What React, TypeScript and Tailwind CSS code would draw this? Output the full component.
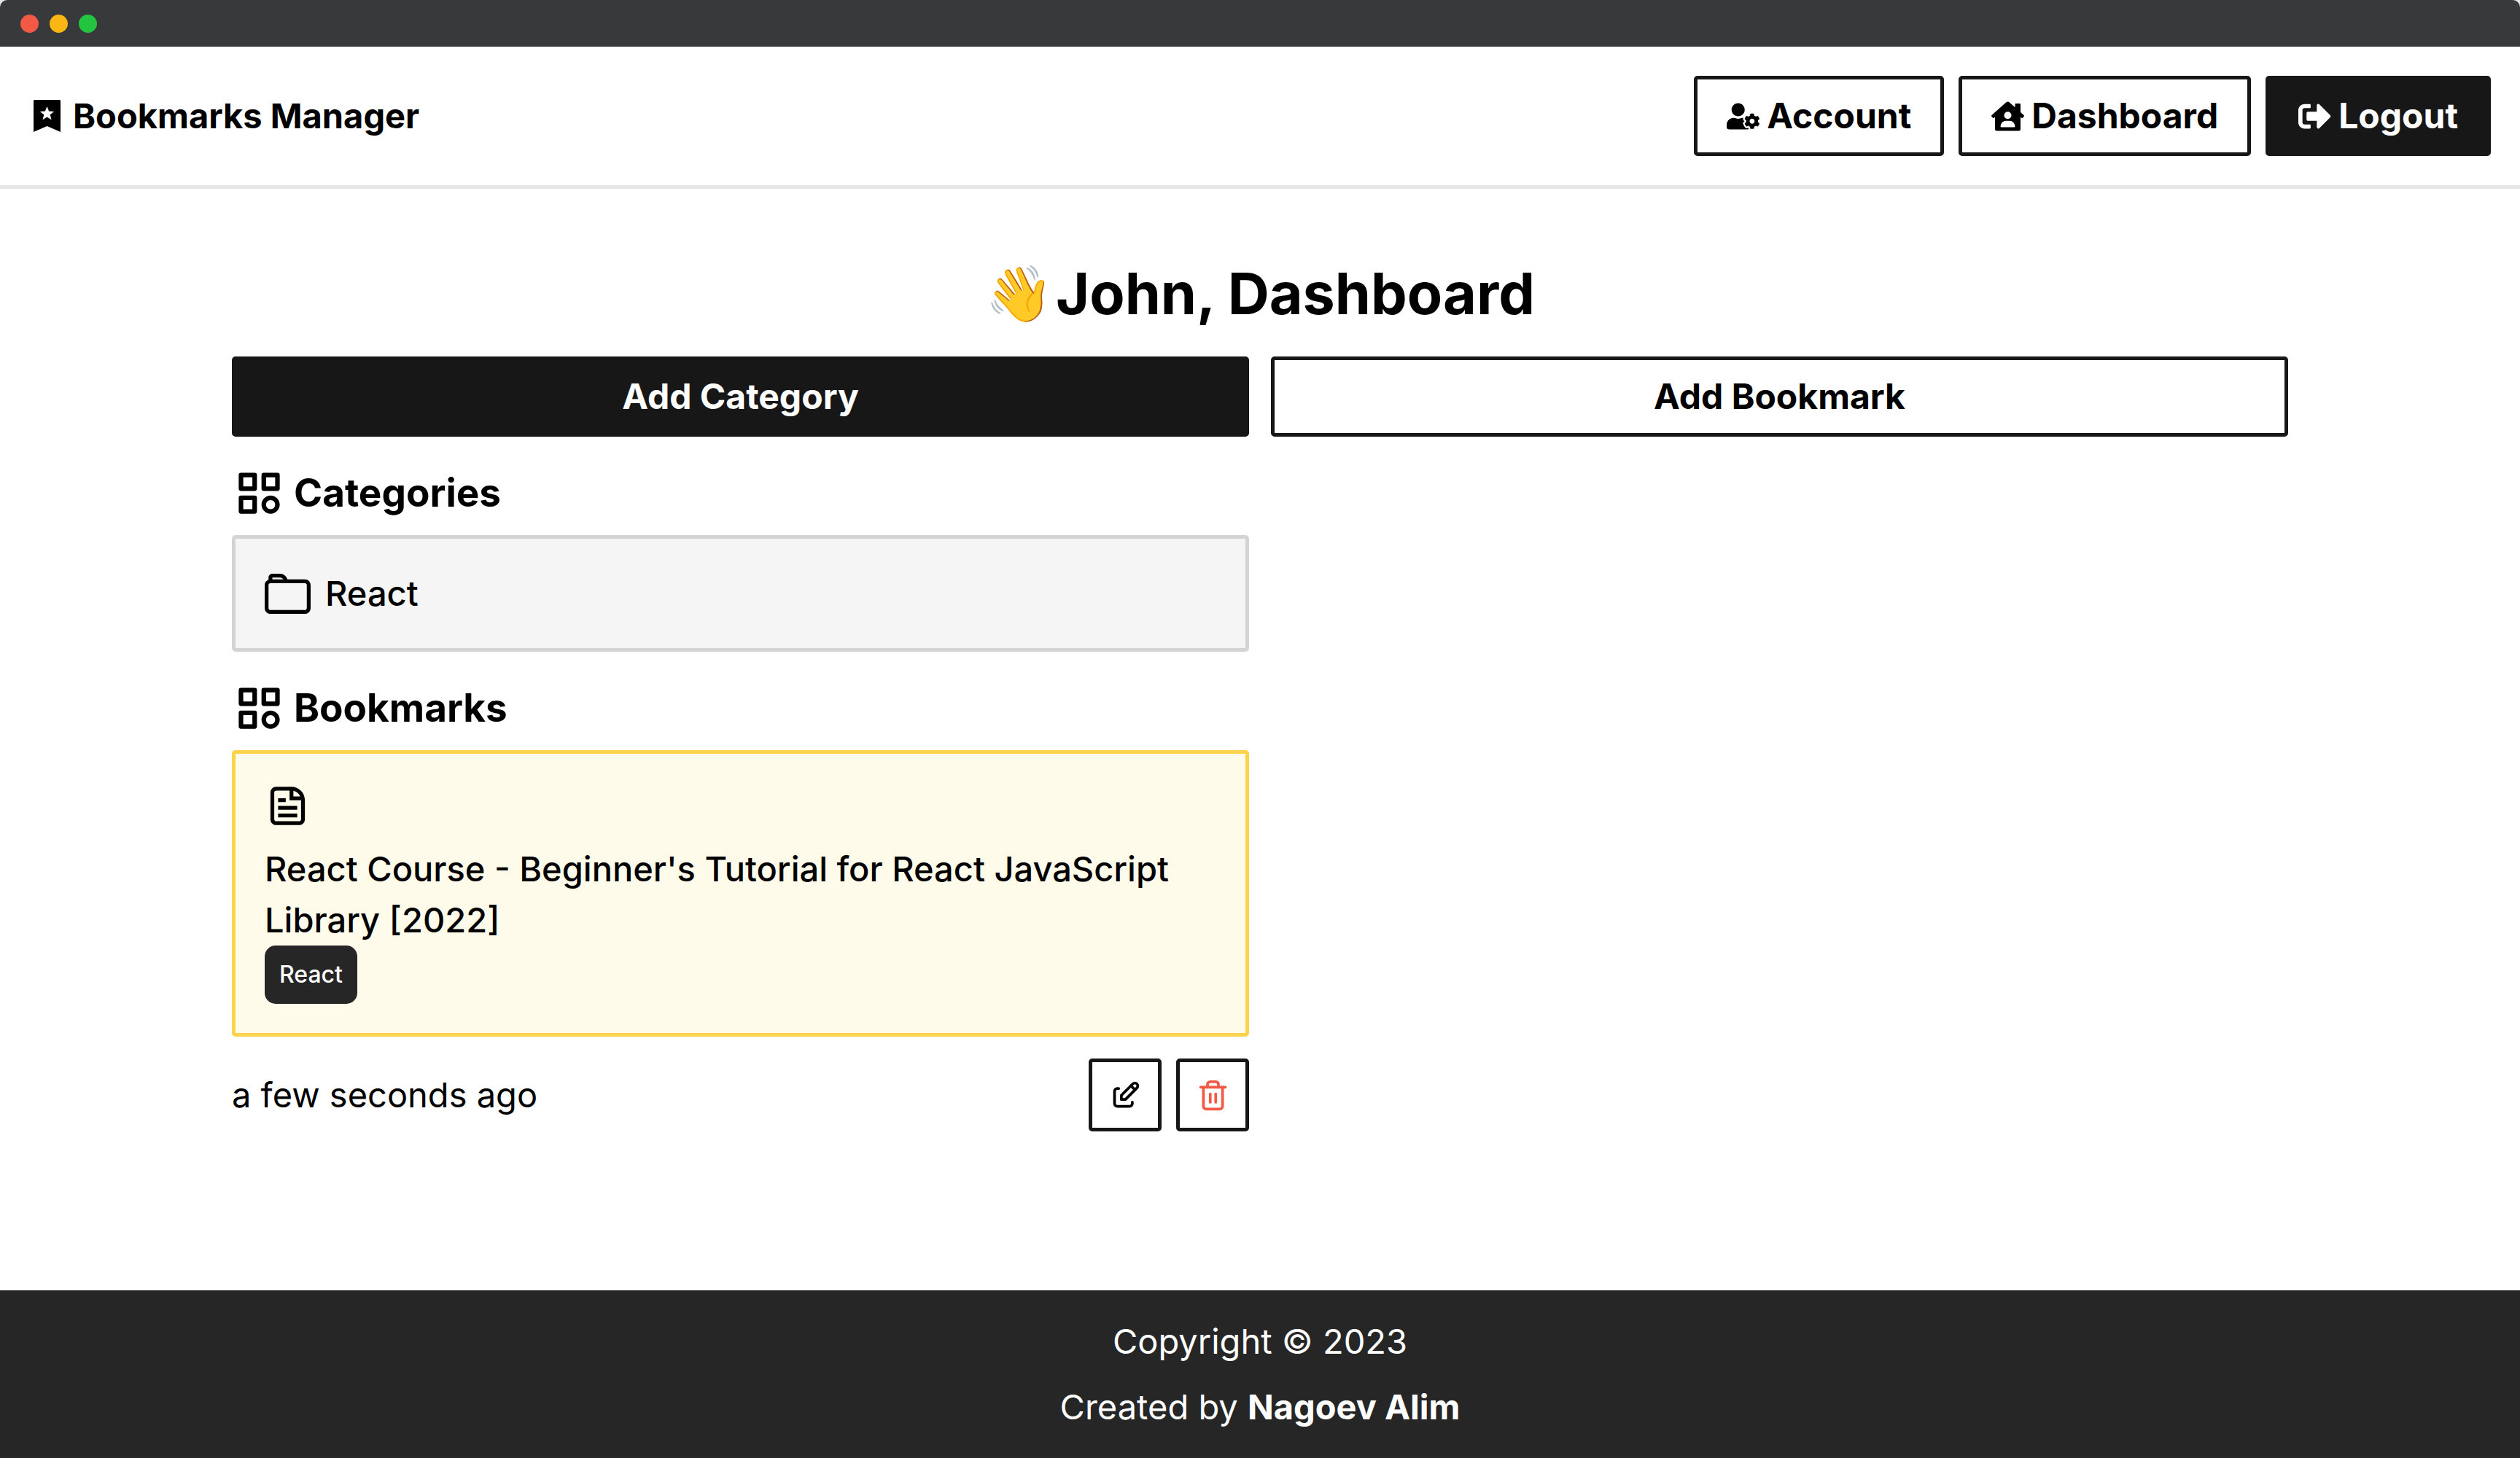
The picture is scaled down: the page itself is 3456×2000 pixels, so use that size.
import type { ReactNode } from "react";
import { BiCategory } from "react-icons/bi";
import { CgFileDocument, CgFolder } from "react-icons/cg";
import { FaHouseUser, FaSignOutAlt, FaUserCog } from "react-icons/fa";
import { FiTrash2 } from "react-icons/fi";
import { TbEdit } from "react-icons/tb";

function LogoMark() {
  return (
    <svg viewBox="0 0 50 50" className="size-[50px]" aria-hidden="true">
      <path
        fillRule="evenodd"
        fill="currentColor"
        d="M7.500 3h34A1.500 1.500 0 0 1 43 4.500V47L24.500 39L6 47V4.500A1.500 1.500 0 0 1 7.500 3ZM24.500 12L27.100 18.400L34.200 18.900L28.700 23.300L30.500 30.200L24.500 26.500L18.500 30.200L20.300 23.300L14.800 18.900L21.900 18.400Z"
      />
    </svg>
  );
}

function WindowBar() {
  return (
    <div className="flex h-16 items-center gap-[15px] rounded-t-[10px] bg-[#38393b] px-7">
      <span className="size-[25px] rounded-full bg-[#f25a46]" />
      <span className="size-[25px] rounded-full bg-[#fcb614]" />
      <span className="size-[25px] rounded-full bg-[#25c440]" />
    </div>
  );
}

function NavLink({ icon, label }: { icon: ReactNode; label: string }) {
  return (
    <a
      href="#"
      className="flex h-[110px] items-center gap-[10px] rounded-[5px] border-[5px] border-neutral-900 px-10 text-[48px] font-bold"
    >
      {icon}
      {label}
    </a>
  );
}

function SectionTitle({ children }: { children: ReactNode }) {
  return (
    <h2 className="mt-10 mb-5 flex items-center gap-[10px] text-[53px] leading-[75px] font-bold">
      <BiCategory className="size-[75px]" />
      {children}
    </h2>
  );
}

function IconButton({ label, children }: { label: string; children: ReactNode }) {
  return (
    <button
      type="button"
      aria-label={label}
      className="flex size-[100px] items-center justify-center rounded-[5px] border-[5px] border-neutral-900"
    >
      {children}
    </button>
  );
}

export default function App() {
  return (
    <div className="flex min-h-screen flex-col bg-white font-['Inter',sans-serif] text-[47px] leading-[70px] text-black">
      <div className="bg-neutral-200">
        <WindowBar />
      </div>

      <header className="flex items-center justify-between border-b-[5px] border-neutral-200 p-10">
        <a href="#" className="flex items-center gap-[10px] font-bold">
          <LogoMark />
          Bookmarks Manager
        </a>
        <nav className="flex gap-5">
          <NavLink icon={<FaUserCog className="size-[45px]" />} label="Account" />
          <NavLink icon={<FaHouseUser className="size-[45px]" />} label="Dashboard" />
          <button
            type="button"
            className="flex h-[110px] items-center gap-[10px] rounded-[5px] border-[5px] border-neutral-900 bg-neutral-900 px-10 text-[48px] font-bold text-white"
          >
            <FaSignOutAlt className="size-[45px]" />
            Logout
          </button>
        </nav>
      </header>

      <main className="mx-auto w-full max-w-[2820px] flex-1 pt-24">
        <h1 className="mb-10 flex items-center justify-center gap-1 text-[79px] leading-[94px] font-bold">
          <span className="text-[75px]">👋</span>
          John, Dashboard
        </h1>

        <div className="grid grid-cols-2 gap-x-[30px]">
          <button
            type="button"
            className="h-[110px] rounded-[5px] border-[5px] border-neutral-900 bg-neutral-900 text-[48px] font-bold text-white"
          >
            Add Category
          </button>
          <button
            type="button"
            className="h-[110px] rounded-[5px] border-[5px] border-neutral-900 text-[48px] font-bold"
          >
            Add Bookmark
          </button>
        </div>

        <section>
          <SectionTitle>Categories</SectionTitle>
          <div className="grid grid-cols-2 gap-x-[30px]">
            <a
              href="#"
              className="flex items-center gap-5 rounded-[5px] border-[5px] border-neutral-300 bg-neutral-100 p-10 font-medium"
            >
              <CgFolder className="size-[63px]" />
              React
            </a>
          </div>
        </section>

        <section>
          <SectionTitle>Bookmarks</SectionTitle>
          <div className="grid grid-cols-2 gap-x-[30px]">
            <article>
              <a
                href="#"
                className="block rounded-[5px] border-[5px] border-[#fcd34d] bg-[#fffbeb] p-10 font-medium"
              >
                <CgFileDocument className="mb-5 size-[63px]" />
                <p>React Course - Beginner's Tutorial for React JavaScript Library [2022]</p>
                <span className="block w-fit rounded-[15px] bg-neutral-800 px-5 text-[32px] leading-[80px] text-white">
                  React
                </span>
              </a>
              <div className="mt-[30px] flex items-center justify-between">
                <time>a few seconds ago</time>
                <div className="flex gap-5">
                  <IconButton label="Edit bookmark">
                    <TbEdit className="size-[45px]" />
                  </IconButton>
                  <IconButton label="Delete bookmark">
                    <FiTrash2 className="size-[45px] text-[#f25a46]" />
                  </IconButton>
                </div>
              </div>
            </article>
          </div>
        </section>
      </main>

      <footer className="flex flex-col items-center gap-5 bg-neutral-800 py-[35px] text-white">
        <p>Copyright © 2023</p>
        <p>
          Created by{" "}
          <a href="#" className="font-bold">
            Nagoev Alim
          </a>
        </p>
      </footer>
    </div>
  );
}
